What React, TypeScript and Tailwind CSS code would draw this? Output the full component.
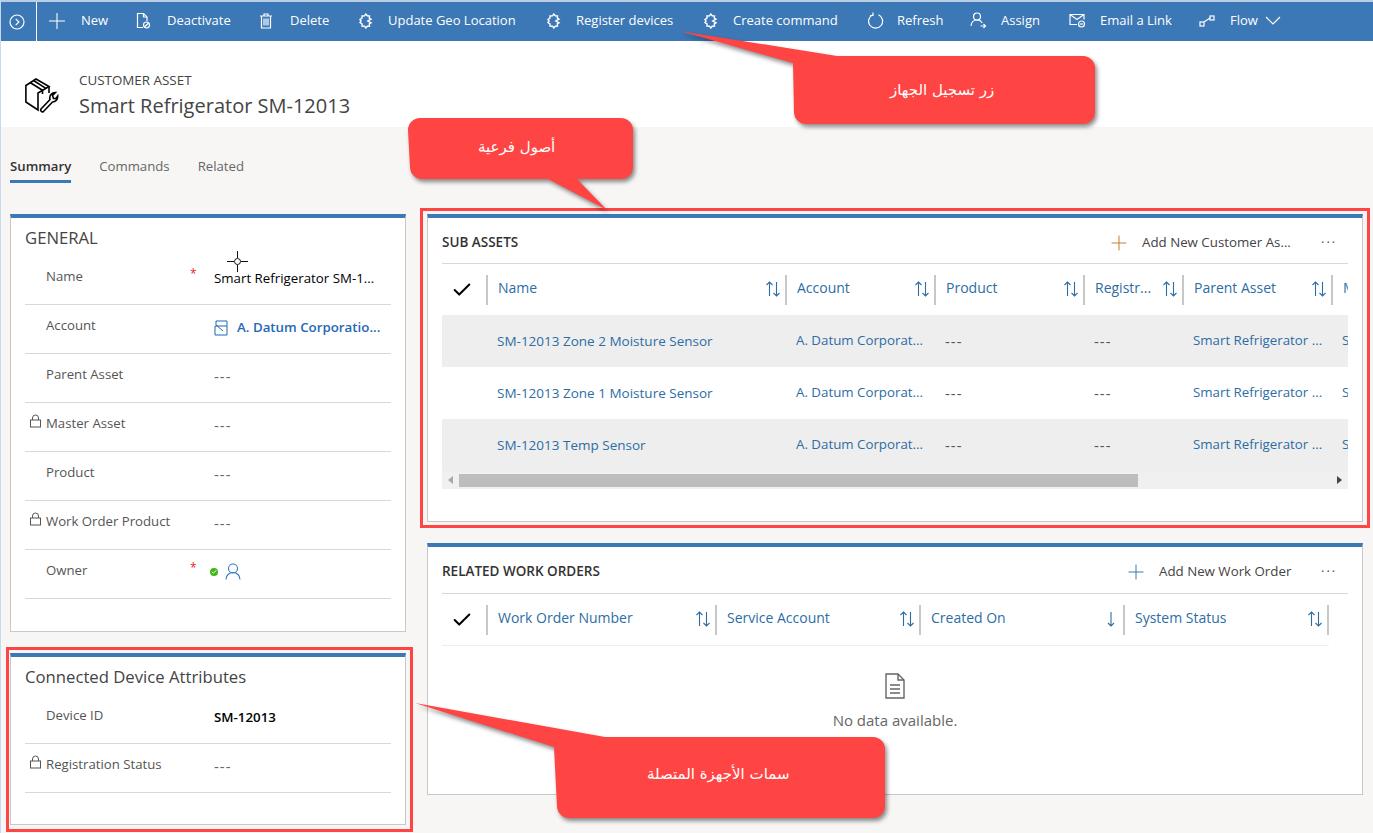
import React from "react";
import { Plus, Check } from "lucide-react";

const FONT = "font-['Open_Sans','Noto_Sans',sans-serif]";

function CircleChevron() {
  return (
    <svg width="16" height="16" viewBox="0 0 16 16" fill="none" stroke="white" strokeWidth="1.2">
      <circle cx="8" cy="8" r="7" />
      <path d="M6.7 4.8 9.9 8l-3.2 3.2" />
    </svg>
  );
}
function DocClock() {
  return (
    <svg width="16" height="18" viewBox="0 0 16 18" fill="none" stroke="white" strokeWidth="1.2">
      <path d="M8 15.5H2.5V1.5h6l3.5 3.5v4" />
      <path d="M8.5 1.5V5H12" />
      <circle cx="11.5" cy="13" r="3" />
      <path d="M9.5 15l4-4" />
    </svg>
  );
}
function Trash() {
  return (
    <svg width="14" height="16" viewBox="0 0 14 16" fill="none" stroke="white" strokeWidth="1.2">
      <path d="M1 3h12M5 3V1h4v2M2.5 3v12h9V3M5 5.5v7M7 5.5v7M9 5.5v7" />
    </svg>
  );
}
function Piece() {
  return (
    <svg width="15" height="16" viewBox="0 0 15 16" fill="none" stroke="white" strokeWidth="1.4">
      <path d="M4 3 6.500 2.800 7.800 1 9.300 2.800 11.500 3 11.300 5.200 13 6.200 9.800 8 13 9.800 11.300 10.800 11.500 13 9.300 13.200 7.800 15 6.500 13.200 4 13 4 10.800 2 9.500 3 8 2 6.500 4 5.200Z" />
    </svg>
  );
}
function Refresh() {
  return (
    <svg width="16" height="18" viewBox="0 0 16 18" fill="none" stroke="white" strokeWidth="1.2" className="ml-[3px]">
      <path d="M10.500 2.800a7 7 0 1 1-5.800 0" />
      <path d="M5 0.500v3H2" />
    </svg>
  );
}
function Assign() {
  return (
    <svg width="17" height="17" viewBox="0 0 17 17" fill="none" stroke="white" strokeWidth="1.2">
      <circle cx="7" cy="4.500" r="3.500" />
      <path d="M1 14c.3-3.500 2.500-6 6-6s4.500 1.500 5 3" />
      <path d="M10.500 14h5M13.500 12l2 2-2 2" />
    </svg>
  );
}
function Email() {
  return (
    <svg width="17" height="15" viewBox="0 0 17 15" fill="none" stroke="white" strokeWidth="1.2">
      <path d="M8 11.500H1V1.500h14v5" />
      <path d="m1 1.500 7 5 7-5" />
      <circle cx="12.500" cy="11" r="3" />
      <path d="M11 11h3" />
    </svg>
  );
}
function FlowIcon() {
  return (
    <svg width="16" height="12" viewBox="0 0 16 12" fill="none" stroke="white" strokeWidth="1.2">
      <rect x="1" y="7" width="4" height="4" />
      <rect x="11" y="1" width="4" height="4" />
      <path d="m5 7 6-4" />
    </svg>
  );
}

function AssetIcon() {
  return (
    <svg width="34" height="35" viewBox="0 0 34 35" fill="none" stroke="black" strokeWidth="1.600" className="mt-[6px] block shrink-0">
      <path d="M11 1 .9 7.500V24L13 32V15L24 8.500 11 1z" />
      <path d="M24 8.500V15" />
      <path d="M5 4.500 17.500 12.200V16" />
      <path d="M8.500 2.500 20.500 10.200" />
      <path d="M16 31 25 21.500A5.500 5.500 0 0 1 30.500 14.500L27.500 17.500 28.500 20.500 31 20.500 32.700 18A5.500 5.500 0 0 1 27.500 24L18.500 33.500A1.800 1.800 0 0 1 16 31z" />
    </svg>
  );
}

function SortIcon({ down = false }: { down?: boolean }) {
  return (
    <svg width="16" height="16" viewBox="0 0 16 16" fill="none" stroke="#2d6da4" strokeWidth="1.100" className="mb-[2px] shrink-0">
      {!down && <path d="M4.500 15V1M1.500 4l3-3 3 3" />}
      <path d={down ? "M8 1v14M5 12l3 3 3-3" : "M11.500 1v14M8.500 12l3 3 3-3"} />
    </svg>
  );
}

function LockIcon() {
  return (
    <svg width="13" height="14" viewBox="0 0 13 14" fill="none" stroke="#555" strokeWidth="1">
      <rect x="1.500" y="6" width="10" height="7" />
      <path d="M3.500 6V4a3 3 0 0 1 6 0v2" />
    </svg>
  );
}

function Cmd({ icon, label, w, gap = "gap-[13px]" }: { icon: React.ReactNode; label: string; w: string; gap?: string }) {
  return (
    <div className={`flex shrink-0 items-center ${gap}`}>
      <span className="flex w-5 shrink-0 justify-center">{icon}</span>
      <span className={`whitespace-nowrap text-[13px] text-white ${w}`}>{label}</span>
    </div>
  );
}

function FormRow({ label, lock, req, children }: { label: string; lock?: boolean; req?: boolean; children: React.ReactNode }) {
  return (
    <div className="flex h-[49px] border-b border-[#d8d8d8]">
      <div className="flex w-[21px] shrink-0 justify-end pt-[11px] pr-[4px]">{lock && <LockIcon />}</div>
      <div className="w-[144px] shrink-0 whitespace-nowrap pt-[11px] text-[13.2px] text-[#555]">{label}</div>
      <div className="w-[24px] shrink-0 pt-[11px] text-[12px] leading-[14px] text-[#e22]">{req ? "*" : ""}</div>
      <div className="min-w-0 flex-1 whitespace-nowrap pt-[13px] text-[13.3px]">{children}</div>
    </div>
  );
}

const Dash = () => <span className="text-[15px] leading-[18px] tracking-[1px] text-[#666]">---</span>;

const cols = [
  { label: "Name", w: "w-[299px]" },
  { label: "Account", w: "w-[149px]" },
  { label: "Product", w: "w-[149px]" },
  { label: "Registr...", w: "w-[99px]" },
  { label: "Parent Asset", w: "w-[149px]" },
];

const rows = [
  { name: "SM-12013 Zone 2 Moisture Sensor", gray: true },
  { name: "SM-12013 Zone 1 Moisture Sensor", gray: false },
  { name: "SM-12013 Temp Sensor", gray: true },
];

function HeaderCell({ label, w, down }: { label: string; w: string; down?: boolean }) {
  return (
    <div className={`flex h-[30px] shrink-0 items-center border-l-2 border-[#c8c8c8] pl-[10px] pr-[4px] ${w}`}>
      <span className="flex-1 overflow-hidden whitespace-nowrap pb-[5px] text-[14px] text-[#2d6da4]">{label}</span>
      <SortIcon down={down} />
    </div>
  );
}

function Dots() {
  return <span className="ml-[29px] mr-[14px] w-[13px] text-[13px] leading-none tracking-[2px] text-[#555]">···</span>;
}

const TableDash = () => <span className="text-[15px] tracking-[1px] text-[#555]">---</span>;

function SubAssets() {
  return (
    <section className="h-[308px] shrink-0 border border-t-4 border-[#c8c8c8] border-t-[#3b78b5] bg-white px-[14px]">
      <div className="flex h-[46px] items-center border-b border-[#d8d8d8] pt-[4px]">
        <h2 className="flex-1 text-[13.5px] font-semibold text-[#333]">SUB ASSETS</h2>
        <Plus size={24} strokeWidth={1} className="text-[#c77e2f]" />
        <span className="ml-[11px] w-[150px] whitespace-nowrap text-[13.3px] text-[#444]">Add New Customer As...</span>
        <Dots />
      </div>
      <div className="overflow-hidden">
        <div className="flex h-[51px] items-center">
          <div className="flex w-[44px] shrink-0 justify-center pr-[4px]">
            <Check size={22} strokeWidth={2.200} className="text-black" />
          </div>
          {cols.map((c) => (
            <HeaderCell key={c.label} label={c.label} w={c.w} />
          ))}
          <div className="flex h-[30px] w-[60px] shrink-0 items-center border-l-2 border-[#c8c8c8] pb-[5px] pl-[10px] text-[14px] text-[#2d6da4]">Master</div>
        </div>
        {rows.map((r) => (
          <div key={r.name} className={`flex h-[52px] items-center whitespace-nowrap text-[13.3px] text-[#2d6da4] ${r.gray ? "bg-[#eeeeee]" : "bg-white"}`}>
            <div className="w-[55px] shrink-0" />
            <div className="w-[299px] shrink-0 text-[13.5px]">{r.name}</div>
            <div className="w-[149px] shrink-0">A. Datum Corporat...</div>
            <div className="w-[149px] shrink-0"><TableDash /></div>
            <div className="w-[99px] shrink-0"><TableDash /></div>
            <div className="w-[149px] shrink-0">Smart Refrigerator ...</div>
            <div className="w-[50px] shrink-0">SM-12013</div>
          </div>
        ))}
        <div className="flex h-[18px] items-center bg-[#f0f0f0]">
          <div className="flex w-[17px] justify-center">
            <div className="h-0 w-0 border-y-[4px] border-r-[5px] border-y-transparent border-r-[#aaa]" />
          </div>
          <div className="h-[13px] w-[679px] bg-[#bdbdbd]" />
          <div className="flex flex-1 justify-end pr-[6px]">
            <div className="h-0 w-0 border-y-[4px] border-l-[5px] border-y-transparent border-l-[#444]" />
          </div>
        </div>
      </div>
    </section>
  );
}

function WorkOrders() {
  return (
    <section className="mt-[21px] h-[252px] shrink-0 border border-t-4 border-[#c8c8c8] border-t-[#3b78b5] bg-white px-[14px]">
      <div className="flex h-[47px] items-center border-b border-[#d8d8d8] pt-[3px]">
        <h2 className="flex-1 text-[13.5px] font-semibold text-[#333]">RELATED WORK ORDERS</h2>
        <Plus size={24} strokeWidth={1} className="text-[#3b78b5]" />
        <span className="ml-[11px] w-[133px] whitespace-nowrap text-[13.3px] text-[#444]">Add New Work Order</span>
        <Dots />
      </div>
      <div className="flex h-[52px] w-[887px] items-center border-b border-[#eeeeee]">
        <div className="flex w-[44px] shrink-0 justify-center pr-[4px]">
          <Check size={22} strokeWidth={2.200} className="text-black" />
        </div>
        <HeaderCell label="Work Order Number" w="w-[229px]" />
        <HeaderCell label="Service Account" w="w-[204px]" />
        <HeaderCell label="Created On" w="w-[204px]" down />
        <div className="border-r-2 border-[#c8c8c8]">
          <HeaderCell label="System Status" w="w-[204px]" />
        </div>
      </div>
      <div className="flex flex-col items-center pt-[27px]">
        <svg width="22" height="26" viewBox="0 0 22 26" fill="none" stroke="#666" strokeWidth="1.400">
          <path d="M2 1h12l6 6v18H2z" />
          <path d="M14 1v6h6M6 12h10M6 16h10M6 20h10" />
        </svg>
        <p className="mt-[10px] text-[15px] text-[#666]">No data available.</p>
      </div>
    </section>
  );
}

function Callout({ className, w, h, points, label, bodyClass }: { className: string; w: number; h: number; points: string; label: string; bodyClass: string }) {
  return (
    <div className={`absolute ${className}`}>
      <svg width={w} height={h} viewBox={`0 0 ${w} ${h}`} className="block overflow-visible drop-shadow-[2px_3px_2px_rgba(0,0,0,0.45)]">
        <path d={points} fill="#ff4444" />
      </svg>
      <span dir="rtl" className={`absolute whitespace-nowrap font-['DejaVu_Sans',sans-serif] text-[15px] text-white ${bodyClass}`}>{label}</span>
    </div>
  );
}

export default function App() {
  return (
    <div className={`relative h-[833px] w-[1373px] overflow-hidden bg-[#f7f6f5] ${FONT}`}>
      <div className="h-[2px] bg-[#b9cde5]" />
      <header className="flex h-[39px] items-center bg-[#3b78b5]">
        <div className="flex h-[39px] w-[37px] shrink-0 items-center justify-center border-r border-white pr-[3px]">
          <CircleChevron />
        </div>
        <div className="ml-[10px] flex items-center gap-[24px] pb-[2px]">
          <Cmd icon={<Plus size={26} strokeWidth={1} className="shrink-0 text-white" />} label="New" w="w-[28px]" gap="gap-[14px]" />
          <Cmd icon={<DocClock />} label="Deactivate" w="w-[65px]" gap="gap-[14px]" />
          <Cmd icon={<Trash />} label="Delete" w="w-[41px]" gap="gap-[14px]" />
          <Cmd icon={<Piece />} label="Update Geo Location" w="w-[131px]" />
          <Cmd icon={<Piece />} label="Register devices" w="w-[100px]" />
          <Cmd icon={<Piece />} label="Create command" w="w-[107px]" />
          <Cmd icon={<Refresh />} label="Refresh" w="w-[47px]" />
          <Cmd icon={<Assign />} label="Assign" w="w-[42px]" />
          <Cmd icon={<Email />} label="Email a Link" w="w-[72px]" />
          <div className="ml-px flex items-center">
            <span className="flex w-5 justify-center"><FlowIcon /></span>
            <span className="ml-[13px] text-[13px] text-white">Flow</span>
            <svg width="16" height="9" viewBox="0 0 16 9" fill="none" stroke="white" strokeWidth="1.200" className="ml-[7px]">
              <path d="M1 1l7 7 7-7" />
            </svg>
          </div>
        </div>
      </header>

      <div className="flex h-[86px] items-start bg-white pl-[25px] pt-[31px]">
        <AssetIcon />
        <div className="ml-[20px]">
          <div className="text-[13.4px] leading-[16px] text-[#444]">CUSTOMER ASSET</div>
          <div className="mt-[4px] text-[20px] leading-[28px] text-[#444]">Smart Refrigerator SM-12013</div>
        </div>
      </div>

      <nav className="flex h-[87px] items-start gap-[28px] pl-[10px] pt-[30px] text-[13.2px]">
        <div className="h-[26px] border-b-[3px] border-[#3b78b5] font-semibold text-[#333]">Summary</div>
        <div className="text-[#666]">Commands</div>
        <div className="text-[#666]">Related</div>
      </nav>

      <main className="flex items-start">
        <div className="ml-[10px] flex w-[396px] shrink-0 flex-col">
          <section className="h-[418px] border border-t-4 border-[#c8c8c8] border-t-[#3b78b5] bg-white px-[14px]">
            <h2 className="flex h-[38px] items-center pt-px text-[16.7px] text-[#444]">GENERAL</h2>
            <FormRow label="Name" req><span className="text-black">Smart Refrigerator SM-1...</span></FormRow>
            <FormRow label="Account">
              <span className="flex items-center gap-[8px] font-semibold text-[#1f68b5]">
                <svg width="15" height="16" viewBox="0 0 15 16" fill="none" stroke="#1f68b5" strokeWidth="1">
                  <path d="M2 5V1h11v14H1V6h12M2 5l7 6" />
                </svg>
                A. Datum Corporatio...
              </span>
            </FormRow>
            <FormRow label="Parent Asset"><Dash /></FormRow>
            <FormRow label="Master Asset" lock><Dash /></FormRow>
            <FormRow label="Product"><Dash /></FormRow>
            <FormRow label="Work Order Product" lock><Dash /></FormRow>
            <FormRow label="Owner" req>
              <span className="flex items-center gap-[7px]">
                <span className="-ml-[4px] flex h-[8px] w-[8px] items-center justify-center rounded-full bg-[#3fb618]">
                  <Check size={6} strokeWidth={4} className="text-white" />
                </span>
                <svg width="16" height="17" viewBox="0 0 16 17" fill="none" stroke="#2f78c8" strokeWidth="1.100">
                  <circle cx="8" cy="5.500" r="4.500" />
                  <path d="M1 16.500c0-4 3-7 7-7s7 3 7 7" />
                </svg>
              </span>
            </FormRow>
          </section>
          <section className="mt-[21px] h-[172px] border border-t-4 border-[#c8c8c8] border-t-[#3b78b5] bg-white px-[14px]">
            <h2 className="flex h-[38px] items-center pt-px text-[16.7px] text-[#444]">Connected Device Attributes</h2>
            <FormRow label="Device ID"><span className="font-semibold text-black">SM-12013</span></FormRow>
            <FormRow label="Registration Status" lock><Dash /></FormRow>
          </section>
        </div>
        <div className="ml-[21px] flex w-[936px] shrink-0 flex-col">
          <SubAssets />
          <WorkOrders />
        </div>
      </main>

      <div className="absolute left-0 top-0 h-full w-px bg-[#c8d8ee]" />
      <div className="absolute left-[420px] top-[208px] h-[320px] w-[950px] border-[3px] border-[#ff4444]" />
      <div className="absolute left-[6px] top-[647px] h-[185px] w-[407px] border-[3px] border-[#ff4444]" />

      <svg width="21" height="21" viewBox="0 0 21 21" fill="none" stroke="#111" strokeWidth="1" className="absolute left-[227px] top-[251px]">
        <path d="M10.500 0v7M10.500 14v7M0 10.500h7M14 10.500h7" />
        <circle cx="10.500" cy="10.500" r="3" />
      </svg>

      <Callout className="left-[680px] top-[31px]" w={415} h={93}
        points="M0 0 L157 25 H403 a12 12 0 0 1 12 12 V81 a12 12 0 0 1 -12 12 H126 a12 12 0 0 1 -12 -12 L113 32 Z"
        label="زر تسجيل الجهاز" bodyClass="left-[210px] top-[48px]" />
      <Callout className="left-[408px] top-[118px]" w={225} h={92}
        points="M12 0 H213 a12 12 0 0 1 12 12 V49 a12 12 0 0 1 -12 12 H169 L199 92 L140 61 H14 a12 12 0 0 1 -12 -12 L0 12 a12 12 0 0 1 12 -12 Z"
        label="أصول فرعية" bodyClass="left-[70px] top-[18px]" />
      <Callout className="left-[415px] top-[703px]" w={470} h={115}
        points="M0 0 L190 34 H458 a12 12 0 0 1 12 12 V103 a12 12 0 0 1 -12 12 H154 a12 12 0 0 1 -12 -12 L139 44 Z"
        label="سمات الأجهزة المتصلة" bodyClass="left-[232px] top-[60px]" />
    </div>
  );
}
